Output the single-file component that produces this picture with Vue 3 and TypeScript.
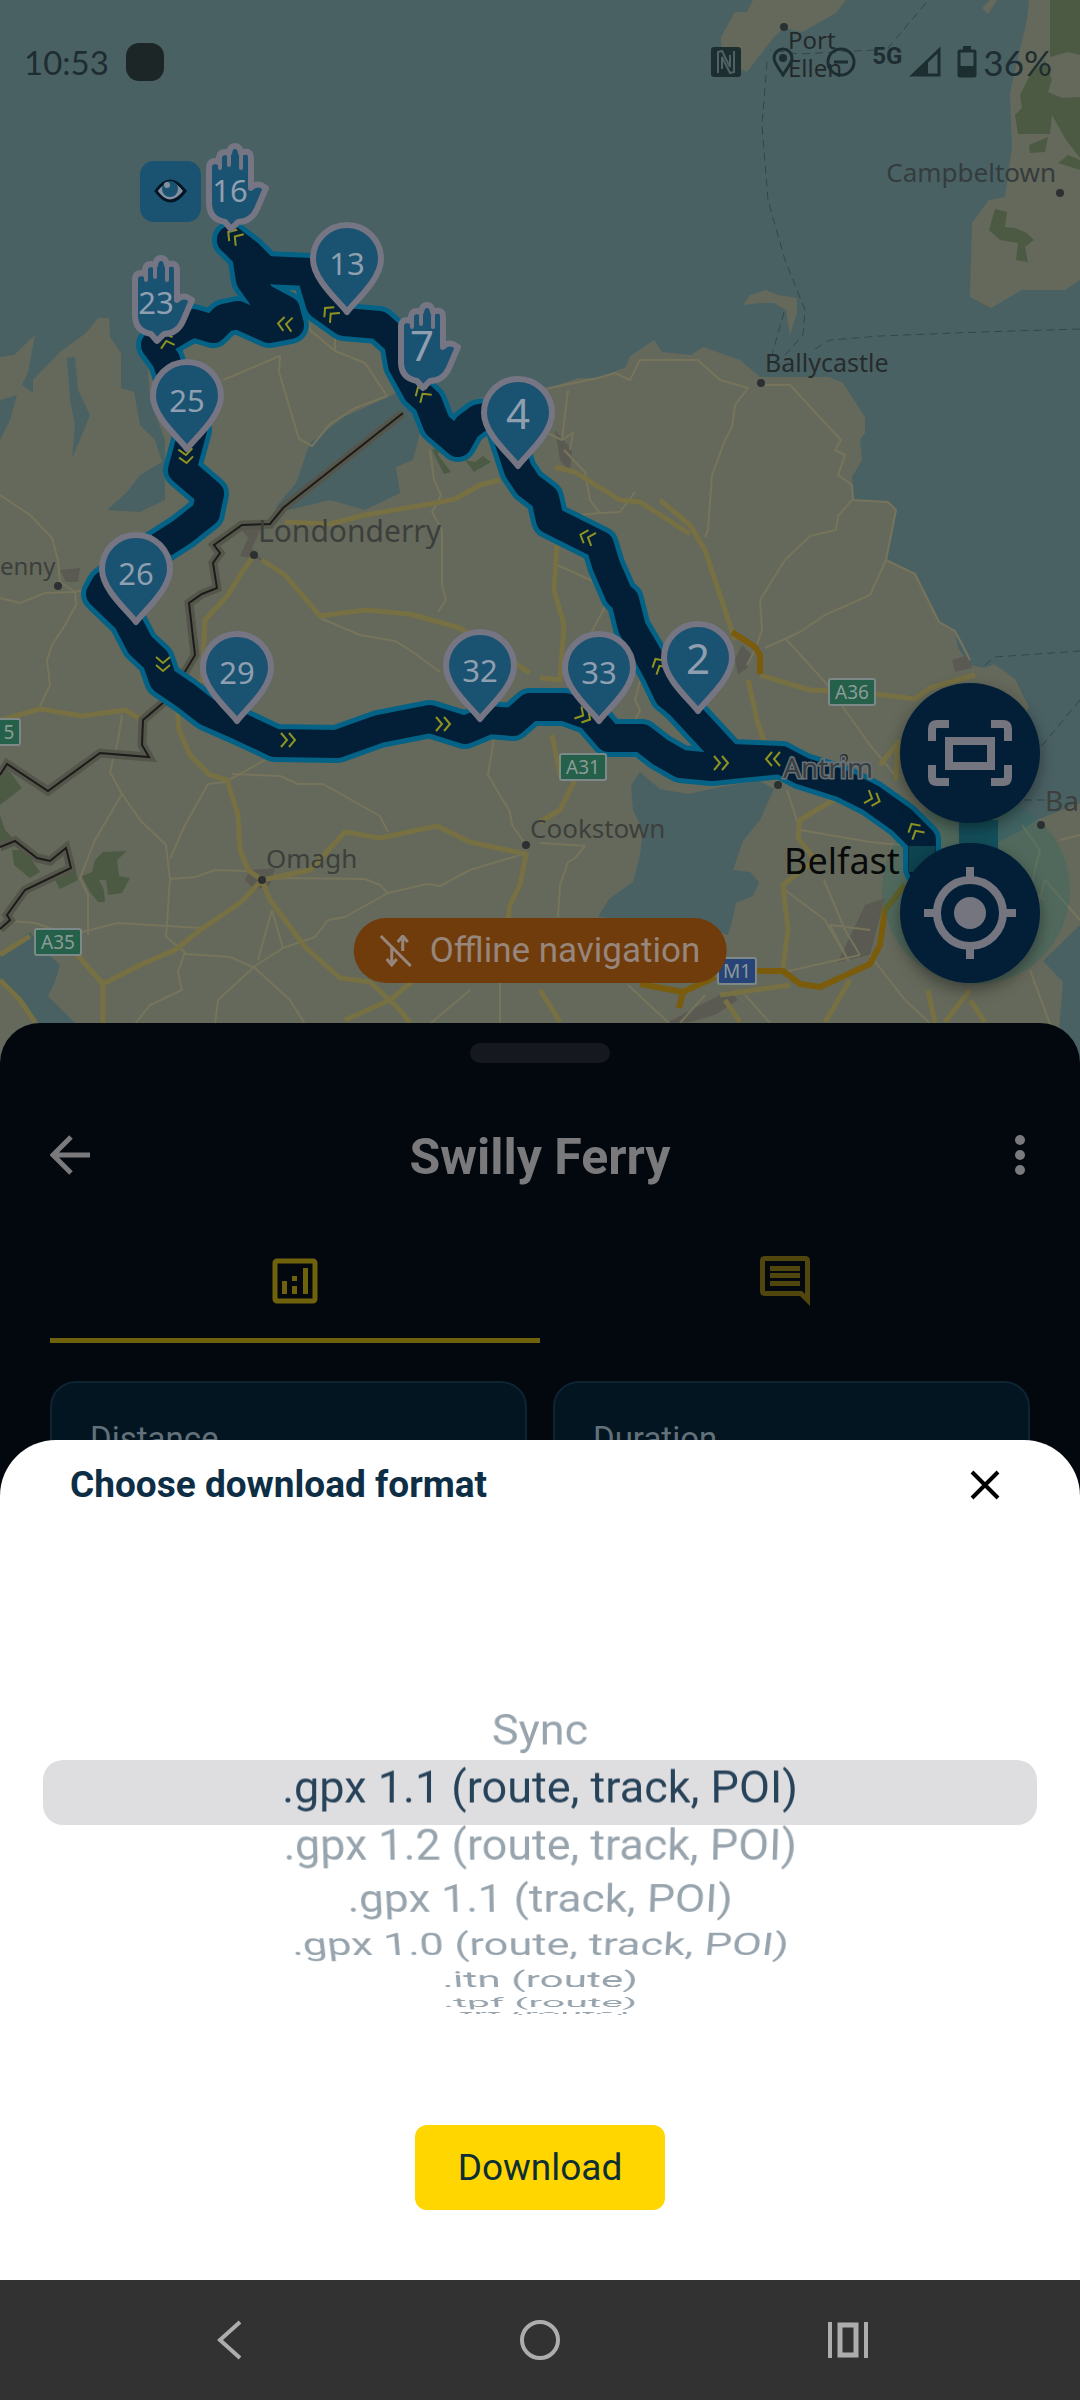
<script setup lang="ts">
import { ref } from 'vue'

interface Pin { n: number; x: number; y: number; big?: boolean }
interface Chevron { x: number; y: number; a: number }
interface Place { name: string; x: number; y: number; size: number; fill: string; halo?: boolean; anchor?: 'start' | 'end' }
interface Shield { name: string; x: number; y: number; w: number; fill: string }
interface Format { id: string; label: string }

const pins: Pin[] = [
  { n: 13, x: 347, y: 315 },
  { n: 4, x: 518, y: 469, big: true },
  { n: 25, x: 187, y: 452 },
  { n: 26, x: 136, y: 625 },
  { n: 29, x: 237, y: 724 },
  { n: 32, x: 480, y: 722 },
  { n: 33, x: 599, y: 724 },
  { n: 2, x: 698, y: 714, big: true },
]

const hands: Pin[] = [
  { n: 16, x: 231, y: 231 },
  { n: 23, x: 157, y: 343 },
  { n: 7, x: 423, y: 390, big: true },
]

// Direction marks along the route; 0 degrees points right.
const chevrons: Chevron[] = [
  { x: 234, y: 236, a: 215 },
  { x: 285, y: 324, a: 185 },
  { x: 330, y: 313, a: 225 },
  { x: 166, y: 340, a: 255 },
  { x: 186, y: 456, a: 85 },
  { x: 422, y: 393, a: 235 },
  { x: 587, y: 537, a: 200 },
  { x: 659, y: 665, a: 240 },
  { x: 163, y: 664, a: 90 },
  { x: 288, y: 740, a: 0 },
  { x: 443, y: 724, a: 0 },
  { x: 584, y: 716, a: 30 },
  { x: 721, y: 763, a: 0 },
  { x: 773, y: 759, a: 180 },
  { x: 873, y: 799, a: 20 },
  { x: 915, y: 830, a: 240 },
]

const places: Place[] = [
  { name: 'Port', x: 788, y: 49, size: 24, fill: '#23292a' },
  { name: 'Ellen', x: 788, y: 77, size: 24, fill: '#23292a' },
  { name: 'Campbeltown', x: 1056, y: 182, size: 26, fill: '#353c3e', anchor: 'end' },
  { name: 'Ballycastle', x: 765, y: 372, size: 25, fill: '#262b2c' },
  { name: 'Londonderry', x: 258, y: 542, size: 30, fill: '#3c3f3b' },
  { name: 'enny', x: 0, y: 575, size: 24, fill: '#3c3f3b' },
  { name: 'Antrim', x: 783, y: 778, size: 28, fill: '#383f43', halo: true },
  { name: 'Cookstown', x: 530, y: 838, size: 26, fill: '#3c3f3b' },
  { name: 'Omagh', x: 266, y: 868, size: 26, fill: '#3c3f3b' },
  { name: 'Belfast', x: 784, y: 874, size: 36, fill: '#08090a' },
  { name: 'Ba', x: 1045, y: 811, size: 28, fill: '#3c3f3b' },
]

const shields: Shield[] = [
  { name: '5', x: 9, y: 732, w: 22, fill: '#25604a' },
  { name: 'A31', x: 583, y: 767, w: 46, fill: '#25604a' },
  { name: 'A35', x: 58, y: 942, w: 46, fill: '#25604a' },
  { name: 'A36', x: 852, y: 692, w: 46, fill: '#25604a' },
  { name: 'M1', x: 737, y: 971, w: 38, fill: '#274377' },
]

const towns: [number, number][] = [
  [784, 27], [1060, 193], [761, 383], [254, 555], [58, 586], [778, 785],
  [526, 845], [262, 880], [1041, 825], [844, 758],
]

const roads = [
  'M223 380 L280 356 279 372 299 439 312 446 330 424 355 408 387 396 365 363 335 351 310 330 302 300',
  'M335 351 V333',
  'M430 450 L434 480 441 495 432 512 442 530 442 585 446 600 438 612',
  'M0 495 L30 515 52 538 58 560 60 582 75 592 76 605 65 625 52 645 47 660 50 685 40 706',
  'M0 598 L20 603 45 593 75 592 90 588',
  'M320 618 L360 635 395 641 410 650 440 672',
  'M122 715 L118 740 110 772 122 794 95 840 80 878 88 895 V935',
  'M122 794 L140 820 166 845 170 880 166 937 185 952 178 972 182 990 150 1005 135 1024',
  'M170 859 L185 825 208 784 225 782 240 774 270 757',
  'M232 774 L280 776 298 784 323 784 380 816 388 832',
  'M170 879 L195 877 215 870 248 871',
  'M265 880 L285 878 365 879 380 885 388 893 427 884 440 886 470 870 520 855',
  'M388 893 L345 917 328 920 315 937 283 948 255 966 218 1000 215 1024',
  'M185 954 L230 957 255 968 290 1000 305 1024',
  'M10 921 L35 923 70 935 118 923 200 928',
  'M272 910 L258 960 M272 910 L283 948',
  'M494 738 L488 775 510 812 512 825 526 845',
  'M540 390 L598 378 615 373 630 380 640 360 698 360 720 380 748 388 735 405 732 427 725 440 712 475 708 530 705 537',
  'M761 385 H790 L841 440 835 450 845 455 838 475 852 485 853 500 888 502 896 510 886 560 915 574 939 622 955 631 970 660',
  'M568 390 L562 440 545 432 M562 440 L573 433 570 450',
  'M564 450 L585 472 590 500 600 513 580 515',
  'M600 513 L620 512 635 492',
  'M852 500 L838 516 836 530 810 536 785 560 760 600 762 630 755 650 747 665',
  'M886 560 L870 595 825 615 800 632 765 648',
  'M785 638 L825 682 870 745 895 775',
  'M557 565 L595 582 M606 605 L590 635',
  'M640 681 L635 700 640 710 628 735',
  'M540 843 L585 846 575 858 568 862 560 885 558 917',
  'M787 790 L800 830 870 842 900 845',
  'M785 890 L825 920 848 960 830 925 870 930',
  'M824 880 L845 930 860 955 M785 972 L815 965 860 955 M870 955 L905 1000 930 1023',
  'M1022 825 L1040 850 1030 890 1045 900 M1030 970 L1050 1024',
  'M705 995 L680 1023 M745 995 L770 1023 M628 985 L670 1024 M470 990 L430 1024 M500 983 V1023',
  'M1080 920 L1045 880 1038 905 M1060 840 L1080 835',
]

const mainRoads = [
  'M285 522 L330 524 365 515 430 504 455 499 480 485 500 480',
  'M555 467 L575 472 620 500 640 502 665 518 690 534',
  'M254 555 L240 575 228 595 205 620 202 680 177 700 179 730 190 755 210 775 227 780 238 815 240 850 248 870 262 880',
  'M262 560 L285 575 320 616 365 610 410 614 460 628 530 673',
  'M0 720 L40 709 82 716 125 710 140 719 165 700',
  'M262 880 L240 903 200 930 175 950 140 965 103 984 73 950',
  'M103 984 V1024 M0 955 L30 936 M0 980 L20 1000 35 1022',
  'M262 880 L270 900 305 947 340 978 370 982 400 1010 410 1023',
  'M345 1020 L390 1000 420 975',
  'M262 880 L310 870 345 832 380 838 437 826 470 842 526 854 520 885 510 905 508 920',
  'M660 500 L690 525 705 550 715 580 735 640',
  'M557 545 L554 590 564 625 560 680 540 678',
  'M552 735 L560 775 575 780 560 810 540 822',
  'M748 680 L757 720 765 745',
  'M760 675 L810 690 860 692 915 699 930 688 975 675',
  'M900 740 L880 765 M898 740 L896 780 M850 790 L800 820 798 838 815 860 783 885 788 930 783 968',
  'M540 990 L560 1022 M850 980 L825 1022 M928 990 L935 1023 M970 990 L945 1022 M970 1000 L985 1022 M720 995 L790 985 M725 1000 L740 1022',
]

const ferries = [
  'M926 3 L888 48 M875 50 L800 54 770 50 M767 62 L762 125 768 200 785 260 805 310 803 335 785 355',
  'M784 312 L772 355',
  'M815 349 L830 340 880 336 980 332 1080 329',
  'M985 665 L995 657 1080 651 M1080 700 L1040 748 M1045 800 H1010',
]

const routes = [
  'M231 240 L248 253 265 270 310 272 320 305 344 322 379 325 398 342 402 365 417 392 428 402 437 425 458 443 467 427 479 418 500 415 518 470 528 485 545 498 550 520 570 530 600 545 606 565 619 595 625 600 632 628 645 650 657 672 668 695 680 705 705 732 729 758 781 760 802 771 843 784 871 798 902 820 922 840 V868',
  'M231 240 L246 255 250 280 262 297 286 310 290 325 269 329 238 315 224 318 213 329 193 323 180 330 155 345 166 360 178 395 193 430 182 470 210 494 206 513 182 532 138 560 105 585 100 594 127 620 140 645 156 660 163 680 185 695 207 712 241 727 275 743 337 744 379 729 430 719 465 730 489 720 513 722 530 707 565 707 590 716 609 738 642 738 660 752 681 764 712 767 781 760',
]

const border =
  'M403 413 L283 508 270 524 242 525 214 545 220 553 213 563 217 588 202 594 189 603 195 655 180 680 164 702 143 720 142 745 149 757 100 753 48 791 7 764 0 775 M0 847 L15 841 37 858 50 861 66 848 71 868 25 890 7 915 10 920 0 929'

const formats: Format[] = [
  { id: 'sync', label: 'Sync' },
  { id: 'gpx11rtp', label: '.gpx 1.1 (route, track, POI)' },
  { id: 'gpx12rtp', label: '.gpx 1.2 (route, track, POI)' },
  { id: 'gpx11tp', label: '.gpx 1.1 (track, POI)' },
  { id: 'gpx10rtp', label: '.gpx 1.0 (route, track, POI)' },
  { id: 'itn', label: '.itn (route)' },
  { id: 'tpf', label: '.tpf (route)' },
  { id: 'trf', label: '.trf (route)' },
]
const selected = ref('gpx11rtp')

// The picker is a drum: rows sit on its surface, 13 degrees apart.
const ROW_ANGLE = 13
const DRUM_RADIUS = 257
const REST_ANGLE = 1
function rowTransform(i: number): string {
  const at = formats.findIndex((f) => f.id === selected.value)
  const angle = REST_ANGLE - (i - at) * ROW_ANGLE
  return `translateZ(${-DRUM_RADIUS}px) rotateX(${angle}deg) translateZ(${DRUM_RADIUS}px)`
}
</script>

<template>
  <div class="screen">
    <div class="stage">
      <main class="base">
        <section class="map" aria-label="Route map">
          <svg class="map-art" viewBox="0 0 1080 1064" preserveAspectRatio="xMidYMin slice">
            <rect width="1080" height="1064" fill="#4a6164" />
            <!-- land -->
            <g fill="#65695b">
              <path d="M0 357 L14 355 35 335 28 372 22 385 33 393 33 380 60 352 86 333 98 318 109 318 110 337 121 353 121 388 134 392 140 425 155 440 162 462 140 475 127 492 107 510 140 512 165 500 165 440 150 400 148 370 165 340 190 325 240 320 232 240 260 245 275 254 310 262 350 305 400 325 420 380 455 418 482 397 540 391 578 378 598 378 626 367 629 357 654 340 662 352 691 355 703 347 740 360 760 377 829 377 843 383 865 417 865 433 860 440 862 460 852 477 853 500 888 502 896 510 886 560 915 574 939 622 955 631 958 648 970 665 985 668 994 664 1015 679 1029 707 1000 760 957 830 970 850 1001 841 1022 830 1036 820 1080 803 V1064 H0Z" />
              <path d="M753 0 L747 12 735 12 721 37 722 60 747 72 774 37 784 28 802 32 836 13 846 0Z" />
              <path d="M1029 0 L1027 20 1019 53 1010 93 1012 147 1005 197 989 200 972 223 970 297 991 308 1022 290 1065 290 1080 280 V0Z" />
              <path d="M743 305 L750 295 766 290 778 295 797 298 797 313 790 335 786 310 774 303 760 303Z" />
              <path d="M990 0 L982 8 988 14 997 0Z" />
            </g>
            <!-- loughs and inlets -->
            <g fill="#4a6164">
              <path d="M403 390 L344 417 310 443 296 483 275 508 289 510 330 500 365 510 400 493 396 467 413 460 420 433Z" />
              <path d="M640 772 L660 789 688 794 726 786 760 781 774 789 760 820 743 841 733 870 750 872 759 882 753 896 736 903 733 917 728 935 700 925 598 917 609 899 633 882 640 855 643 830 633 810 631 786Z" />
              <path d="M0 955 L30 932 45 951 60 965 55 982 48 996 62 1010 76 1024 40 1024 0 982Z" />
              <path d="M1043 961 L1080 925 V1064 H1056 L1063 982Z" />
              <path d="M67 358 L75 357 78 390 90 415 80 440 72 458 75 425 70 400Z" />
              <path d="M0 400 L17 395 10 420 0 440Z" />
            </g>
            <!-- forest -->
            <g fill="#4c5a43">
              <path d="M1050 0 H1080 V55 L1068 52 1050 57Z" />
              <path d="M1045 60 L1052 80 1048 92 1062 98 1080 97 V158 L1066 140 1052 115 1050 134 1018 134 1015 115 1022 108 1020 95 1030 75Z" />
              <path d="M1029 145 L1048 137 1045 152 1030 153Z M1058 163 L1068 155 1080 160 V170Z" />
              <path d="M995 209 L1007 212 1005 227 1015 228 1027 233 1034 240 1025 247 1028 262 1016 260 1018 243 1000 240 989 230Z" />
              <path d="M432 450 L440 445 438 455 451 472 444 474Z M465 460 L475 462 483 456 491 462 474 472Z" />
              <path d="M0 768 L10 772 22 788 0 805Z M0 815 L5 830 15 840 0 848Z M12 850 L25 850 40 872 30 878 14 865Z M55 880 L75 868 78 880 60 889Z M95 860 L103 852 127 851 117 860 119 876 130 878 122 893 108 895 106 880 99 880 104 890 105 902 98 902 90 892 82 876 92 872Z" />
            </g>
            <g fill="#5b5a52">
              <path d="M238 525 L265 520 252 548 262 560 240 556 248 538Z M60 570 L80 568 78 582 66 582Z M555 430 L572 450 570 472 560 460Z" />
              <path d="M742 645 L752 655 747 668 738 675 735 660Z M250 870 L275 868 270 885 255 890 245 880Z M865 905 L885 898 870 955 838 962Z" />
              <path d="M700 1005 L730 990 738 1000 715 1015 690 1022 665 1024Z M952 660 L968 655 972 668 955 672Z" />
            </g>
            <g class="road"><path v-for="d in roads" :key="d" :d="d" /></g>
            <g class="road main"><path v-for="d in mainRoads" :key="d" :d="d" /></g>
            <g class="road motorway">
              <path d="M732 632 L755 647 760 655 V674" />
              <path d="M757 971 H783 L800 984 820 987 870 964 880 945 885 910 905 885" />
              <path d="M640 984 L683 992 715 977 M683 992 L679 1008" />
            </g>
            <path :d="border" class="border-halo" />
            <path :d="border" class="border-line" />
            <g class="ferry"><path v-for="d in ferries" :key="d" :d="d" /></g>
            <circle cx="976" cy="890" r="94" fill="#2d6a62" opacity=".35" />
            <g class="route edge"><path v-for="d in routes" :key="d" :d="d" /></g>
            <g class="route"><path v-for="d in routes" :key="d" :d="d" /></g>
            <path d="M922 846 V872" stroke="#0d4450" stroke-width="27" />
            <path d="M959 820 H998 V850 H959Z" fill="#14505c" />
            <g v-for="c in chevrons" :key="`${c.x}-${c.y}`" class="chevron">
              <path d="M-7 -7 L-1 0 -7 7 M1 -7 L7 0 1 7" :transform="`translate(${c.x} ${c.y}) rotate(${c.a})`" />
            </g>
            <circle v-for="t in towns" :key="t.join()" :cx="t[0]" :cy="t[1]" r="4" fill="#2d3032" />
            <g class="place">
              <text
                v-for="p in places" :key="p.name" :x="p.x" :y="p.y" :font-size="p.size" :fill="p.fill"
                :text-anchor="p.anchor ?? 'start'" :class="{ halo: p.halo }"
              >{{ p.name }}</text>
            </g>
            <g v-for="s in shields" :key="s.name" class="shield">
              <rect :x="s.x - s.w / 2" :y="s.y - 13" :width="s.w" height="26" rx="2" :fill="s.fill" />
              <text :x="s.x" :y="s.y + 7">{{ s.name }}</text>
            </g>
            <g v-for="p in pins" :key="p.n" class="marker" :transform="`translate(${p.x} ${p.y})`">
              <path d="M0 -3 C-7 -13 -34 -35 -34 -56 A34 34 0 0 1 34 -56 C34 -35 7 -13 0 -3Z" />
              <text y="-40" :class="{ big: p.big }">{{ p.n }}</text>
            </g>
            <g v-for="h in hands" :key="h.n" class="marker" :transform="`translate(${h.x} ${h.y})`">
              <path d="M0 -2 L-6 -9 C-17 -11 -22 -18 -22 -28 V-65 Q-21 -70 -16 -70 L-12 -69 V-74 Q-11 -79 -6 -79 L-2 -78 Q-1 -85 4 -85 Q9 -85 10 -78 Q13 -80 17 -79 Q20 -78 20 -73 V-43 Q24 -48 30 -46 L35 -43 26 -22 Q20 -9 7 -9Z" />
              <path class="slit" d="M-11 -72 V-63 M-2 -78 V-66 M10 -78 V-63" />
              <text x="-1" y="-29" :class="{ big: h.big }">{{ h.n }}</text>
            </g>
            <rect x="140" y="161" width="61" height="61" rx="14" fill="#1a5272" />
            <path d="M156 191 Q170 171 185 191 Q170 211 156 191Z" fill="#8290a0" stroke="#031423" stroke-width="3" />
            <circle cx="170" cy="189" r="8" fill="#1a5272" />
            <circle cx="167" cy="185" r="3" fill="#8290a0" />
          </svg>

          <header class="status">
            <time class="clock">10:53</time>
            <span class="blob"></span>
            <span class="grow"></span>
            <svg class="nfc" width="30" height="30" viewBox="0 0 30 30">
              <rect width="30" height="30" rx="3" fill="#1d2e31" />
              <path d="M7 26 V5 L11 4 19 20 V8 M11 22 V10 L19 26 23 25 V4" fill="none" stroke="#4f6163" stroke-width="2" />
            </svg>
            <svg class="loc" width="22" height="30" viewBox="0 0 22 30">
              <path d="M11 28 C7 21 2 16 2 11 A9 9 0 0 1 20 11 C20 16 15 21 11 28Z" fill="none" stroke="#1d2e31" stroke-width="3" />
              <circle cx="11" cy="11" r="4" fill="#1d2e31" />
            </svg>
            <svg class="dnd" width="30" height="30" viewBox="0 0 30 30">
              <circle cx="15" cy="15" r="13" fill="none" stroke="#1d2e31" stroke-width="3" />
              <path d="M8 15 H22" stroke="#1d2e31" stroke-width="3" />
            </svg>
            <span class="net">5G</span>
            <svg class="signal" width="32" height="30" viewBox="0 0 32 30">
              <path d="M30 3 V28 H4Z" fill="none" stroke="#1d2e31" stroke-width="3" />
              <path d="M19 14 V29 H2Z" fill="#1d2e31" />
            </svg>
            <svg class="battery" width="20" height="32" viewBox="0 0 20 32">
              <path d="M6 0 H14 V4 H6Z" fill="#1d2e31" />
              <rect x="2" y="5" width="16" height="25" rx="1" fill="none" stroke="#1d2e31" stroke-width="3" />
              <path d="M2 20 H18 V30 H2Z" fill="#1d2e31" />
            </svg>
            <span class="percent">36%</span>
          </header>

          <div class="fabs">
            <button class="fab" aria-label="Fit route to screen">
              <svg width="84" height="66" viewBox="0 0 84 66" fill="none" stroke="#757580" stroke-width="8">
                <path d="M4 21 V9 Q4 4 9 4 H21 M63 4 H75 Q80 4 80 9 V21 M80 45 V57 Q80 62 75 62 H63 M21 62 H9 Q4 62 4 57 V45" />
                <rect x="21" y="21" width="42" height="25" />
              </svg>
            </button>
            <button class="fab" aria-label="My location">
              <svg width="92" height="92" viewBox="0 0 92 92" fill="none" stroke="#757580" stroke-width="8">
                <circle cx="46" cy="46" r="33" />
                <circle cx="46" cy="46" r="16" fill="#757580" stroke="none" />
                <path d="M46 0 V13 M46 79 V92 M0 46 H13 M79 46 H92" />
              </svg>
            </button>
          </div>

          <button class="offline">
            <svg width="32" height="32" viewBox="0 0 32 32" fill="none" stroke="#96867c" stroke-width="3">
              <path d="M1 1 L31 31 M23 16 V4 M18 7 L23 1 28 7 M12 12 V27 M7 24 L12 30 17 24" />
            </svg>
            <span>Offline navigation</span>
          </button>
        </section>

        <section class="details">
          <div class="grip"></div>
          <div class="title-row">
            <button class="icon-button" aria-label="Back">
              <svg width="40" height="40" viewBox="0 0 40 40" fill="none" stroke="#7a7a7c" stroke-width="5">
                <path d="M40 20 H4 M21 2 L3 20 21 38" />
              </svg>
            </button>
            <h1>Swilly Ferry</h1>
            <button class="icon-button end" aria-label="More options">
              <svg width="20" height="42" viewBox="0 0 20 42" fill="#7a7a7c">
                <circle cx="10" cy="6" r="5" /><circle cx="10" cy="21" r="5" /><circle cx="10" cy="36" r="5" />
              </svg>
            </button>
          </div>
          <div class="tabs" role="tablist">
            <button class="tab active" role="tab" aria-selected="true" aria-label="Statistics">
              <svg width="46" height="46" viewBox="0 0 46 46">
                <rect x="3" y="3" width="40" height="40" rx="2" fill="none" stroke="#70620d" stroke-width="5" />
                <path d="M10 23 H15 V36 H10Z M20 18 H25 V23 H20Z M20 28 H25 V36 H20Z M31 10 H36 V36 H31Z" fill="#70620d" />
              </svg>
            </button>
            <button class="tab" role="tab" aria-selected="false" aria-label="Comments">
              <svg width="50" height="50" viewBox="0 0 50 50">
                <path fill-rule="evenodd" d="M5 0 H45 Q50 0 50 5 V50 L40 40 H5 Q0 40 0 35 V5 Q0 0 5 0Z M5 5 V35 H42 L45 38 V5Z" fill="#51470e" />
                <path d="M10 10 H40 V15 H10Z M10 17 H40 V22 H10Z M10 25 H40 V30 H10Z" fill="#51470e" />
              </svg>
            </button>
          </div>
          <div class="cards">
            <article class="card">Distance</article>
            <article class="card">Duration</article>
          </div>
        </section>
      </main>

      <div class="overlay">
        <form class="dialog" role="dialog" aria-labelledby="dialog-title" @submit.prevent>
          <header class="dialog-head">
            <h2 id="dialog-title">Choose download format</h2>
            <button type="button" class="close" aria-label="Close">
              <svg width="30" height="30" viewBox="0 0 30 30" fill="none" stroke="#000" stroke-width="4">
                <path d="M2 2 L28 28 M28 2 L2 28" />
              </svg>
            </button>
          </header>
          <div class="wheel" role="radiogroup" aria-labelledby="dialog-title">
            <label
              v-for="(f, i) in formats" :key="f.id" class="row" :class="{ on: f.id === selected }"
              :style="{ transform: rowTransform(i) }"
            >
              <input v-model="selected" type="radio" name="format" :value="f.id">
              <span>{{ f.label }}</span>
            </label>
          </div>
          <button type="submit" class="download">Download</button>
        </form>
      </div>
    </div>

    <nav class="system-nav" aria-label="System">
      <button aria-label="Back">
        <svg width="40" height="40" viewBox="0 0 40 40" fill="none" stroke="#adadad" stroke-width="4"><path d="M28 2 L8 20 28 38" /></svg>
      </button>
      <button aria-label="Home">
        <svg width="40" height="40" viewBox="0 0 40 40" fill="none" stroke="#adadad" stroke-width="4"><circle cx="20" cy="20" r="18" /></svg>
      </button>
      <button aria-label="Recent apps">
        <svg width="40" height="36" viewBox="0 0 40 36" fill="none" stroke="#adadad"><path d="M2 0 V36 M38 0 V36" stroke-width="4" /><rect x="12" y="3" width="16" height="30" stroke-width="5" /></svg>
      </button>
    </nav>
  </div>
</template>

<style>
body {
  background: #323232;
}
</style>

<style scoped>
.screen {
  display: flex;
  flex-direction: column;
  min-height: 100vh;
  font-family: Roboto, "Liberation Sans", sans-serif;
}
button {
  margin: 0;
  padding: 0;
  border: 0;
  background: none;
  font: inherit;
  color: inherit;
}
svg {
  display: block;
  flex: none;
}
.stage {
  flex: 1;
  display: grid;
  overflow: hidden;
}
.base,
.overlay {
  grid-area: 1 / 1;
  min-width: 0;
}
.base {
  display: flex;
  flex-direction: column;
}

.map {
  position: relative;
  height: 1063px;
  overflow: hidden;
}
.map-art {
  width: 100%;
  height: 100%;
}
.map-art text {
  font-family: "Noto Sans", sans-serif;
}
.halo {
  stroke: #6a7276;
  stroke-width: 3;
  paint-order: stroke;
}
.road path {
  fill: none;
  stroke: #77745c;
  stroke-width: 2;
  stroke-linejoin: round;
}
.road.main path {
  stroke: #767043;
  stroke-width: 5;
}
.road.motorway path {
  stroke: #7a5c0c;
  stroke-width: 6;
}
.border-halo {
  fill: none;
  stroke: #55564b;
  stroke-width: 9;
}
.border-line {
  fill: none;
  stroke: #1c1b19;
  stroke-width: 2;
}
.ferry path {
  fill: none;
  stroke: #30464e;
  stroke-width: 1;
  stroke-dasharray: 8 5;
}
.route path {
  fill: none;
  stroke: #021f37;
  stroke-width: 28;
  stroke-linejoin: round;
  stroke-linecap: round;
}
.route.edge path {
  stroke: #036285;
  stroke-width: 38;
}
.chevron path {
  fill: none;
  stroke: #8f9420;
  stroke-width: 2;
}
.shield rect {
  stroke: #7d8888;
  stroke-width: 2;
}
.shield text {
  font-size: 19px;
  fill: #8b9c97;
  text-anchor: middle;
}
.marker path {
  fill: #1a5272;
  stroke: #767583;
  stroke-width: 6;
  stroke-linejoin: round;
}
.marker .slit {
  stroke-width: 4;
  stroke-linecap: round;
}
.marker text {
  font-size: 31px;
  fill: #8f9fb0;
  text-anchor: middle;
}
.marker .big {
  font-size: 42px;
}

.status {
  position: absolute;
  top: 0;
  left: 0;
  right: 0;
  height: 124px;
  padding: 0 28px 0 24px;
  display: flex;
  align-items: center;
  color: #1d2d31;
  font-family: Lato, sans-serif;
  font-size: 35px;
}
.clock {
  font-size: 33px;
}
.blob {
  width: 38px;
  height: 38px;
  margin-left: 17px;
  border-radius: 13px;
  background: #1d2626;
}
.grow {
  flex: 1;
}
.loc {
  margin-left: 31px;
}
.dnd {
  margin-left: 32px;
}
.net {
  margin: 0 7px 12px 16px;
  font-family: Roboto, sans-serif;
  font-size: 24px;
  font-weight: 700;
}
.battery {
  margin: 0 6px 0 16px;
}
.fabs {
  position: absolute;
  right: 40px;
  top: 683px;
  display: flex;
  flex-direction: column;
  gap: 20px;
}
.fab {
  width: 140px;
  height: 140px;
  border-radius: 50%;
  background: #021f37;
  box-shadow: 0 6px 16px rgba(0, 0, 0, 0.4);
  display: grid;
  place-items: center;
}
.offline {
  position: absolute;
  bottom: 80px;
  left: 50%;
  transform: translateX(-50%);
  height: 65px;
  padding: 0 26px;
  border-radius: 33px;
  background: #713c0c;
  color: #96867c;
  display: flex;
  align-items: center;
  gap: 18px;
  font-size: 35px;
  white-space: nowrap;
}

.details {
  position: relative;
  flex: 1;
  margin-top: -40px;
  padding: 20px 50px 0;
  border-radius: 40px 40px 0 0;
  background: #02080d;
}
.grip {
  width: 140px;
  height: 20px;
  margin: 0 auto;
  border-radius: 10px;
  background: #15191f;
}
.title-row {
  display: grid;
  grid-template-columns: 60px 1fr 60px;
  align-items: center;
  margin-top: 60px;
  height: 60px;
}
.icon-button {
  justify-self: start;
}
.icon-button.end {
  justify-self: end;
}
h1 {
  margin: 0;
  padding-top: 4px;
  text-align: center;
  font-size: 50px;
  line-height: 60px;
  font-weight: 700;
  color: #7a7a7c;
}
.tabs {
  display: grid;
  grid-template-columns: 1fr 1fr;
  height: 125px;
  margin-top: 35px;
}
.tab {
  display: grid;
  place-items: center;
  padding-top: 6px;
  border-bottom: 5px solid transparent;
}
.tab.active {
  border-color: #70620d;
}
.cards {
  display: grid;
  grid-template-columns: 1fr 1fr;
  gap: 26px;
  margin-top: 38px;
}
.card {
  height: 160px;
  padding: 34px 38px;
  box-sizing: border-box;
  border: 2px solid #0d2433;
  border-radius: 26px;
  background: #031521;
  color: #62707a;
  font-size: 33px;
  line-height: 44px;
}

.overlay {
  position: relative;
  display: flex;
  flex-direction: column;
  justify-content: flex-end;
}
.dialog {
  display: flex;
  flex-direction: column;
  padding: 0 43px 70px;
  border-radius: 56px 56px 0 0;
  background: #fff;
  color: #0d2e45;
}
.dialog-head {
  display: flex;
  align-items: center;
  justify-content: space-between;
  height: 90px;
  padding: 0 37px 0 27px;
}
h2 {
  margin: 0;
  font-size: 37px;
  line-height: 44px;
  font-weight: 700;
}
.wheel {
  position: relative;
  display: grid;
  align-items: center;
  height: 460px;
  margin-top: 32px;
  overflow: hidden;
  perspective: 1500px;
}
.wheel::before {
  content: "";
  grid-area: 1 / 1;
  height: 65px;
  border-radius: 20px;
  background: #dedee0;
}
.row {
  grid-area: 1 / 1;
  text-align: center;
  font-size: 45px;
  line-height: 56px;
  color: #97a4ad;
}
.row.on {
  color: #27435a;
}
.row input {
  position: absolute;
  opacity: 0;
  pointer-events: none;
}
.download {
  align-self: center;
  width: 250px;
  height: 85px;
  margin-top: 103px;
  border-radius: 12px;
  background: #ffd600;
  color: #0d2e35;
  font-size: 37px;
}

.system-nav {
  display: flex;
  justify-content: space-between;
  align-items: center;
  height: 120px;
  padding: 0 212px;
  background: #323232;
}
</style>
